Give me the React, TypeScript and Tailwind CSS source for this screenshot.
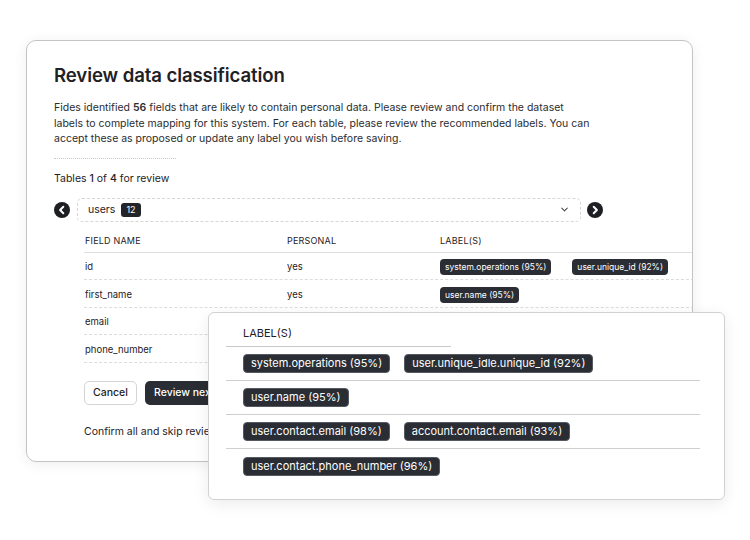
import { ChevronDown } from 'lucide-react';

const font = { fontFamily: 'Inter, "Liberation Sans", sans-serif' };

const rows = [
  { name: 'id', personal: 'yes', labels: ['system.operations (95%)', 'user.unique_id (92%)'] },
  { name: 'first_name', personal: 'yes', labels: ['user.name (95%)'] },
  { name: 'email', personal: 'yes', labels: [] as string[] },
  { name: 'phone_number', personal: 'yes', labels: [] as string[] },
];

const popRows = [
  ['system.operations (95%)', 'user.unique_idle.unique_id (92%)'],
  ['user.name (95%)'],
  ['user.contact.email (98%)', 'account.contact.email (93%)'],
  ['user.contact.phone_number (96%)'],
];

function CircleChevron({ dir }: { dir: 'left' | 'right' }) {
  return (
    <svg width="16" height="16" viewBox="0 0 16 16" className="shrink-0">
      <circle cx="8" cy="8" r="8" fill="#1d1f23" />
      <path
        d={dir === 'left' ? 'M9.3 4.8 6.1 8l3.2 3.2' : 'M6.7 4.8 9.9 8l-3.2 3.2'}
        fill="none"
        stroke="white"
        strokeWidth="2"
        strokeLinecap="round"
        strokeLinejoin="round"
      />
    </svg>
  );
}

function SmallChip({ text }: { text: string }) {
  return (
    <span className="inline-flex items-center h-[16px] px-[5px] rounded-[4px] bg-[#2a2d33] text-white text-[8.5px] leading-none whitespace-nowrap">
      {text}
    </span>
  );
}

function Chip({ text }: { text: string }) {
  return (
    <span className="inline-flex items-center h-[19px] px-[7px] rounded-[4px] bg-[#2a2d33] text-white text-[11px] leading-none whitespace-nowrap border border-[#555a62]">
      {text}
    </span>
  );
}

export default function App() {
  return (
    <div className="relative w-[750px] h-[540px] bg-white overflow-hidden text-[#1f2125]" style={font}>
      <div className="ml-[26px] mt-[40px] w-[667px] h-[422px] rounded-[10px] border border-[#c4c4c4] bg-white shadow-[0_2px_14px_rgba(0,0,0,0.07)] overflow-hidden pl-[27px] pt-[22px]">
        <h1 className="text-[18.6px] leading-[24px] font-semibold tracking-[-0.1px]">Review data classification</h1>
        <p className="mt-[13px] text-[10.5px] leading-[15.5px] text-[#2a2c30]">
          Fides identified <span className="font-semibold">56</span> fields that are likely to contain personal data. Please review and confirm the dataset
          <br />
          labels to complete mapping for this system. For each table, please review the recommended labels. You can
          <br />
          accept these as proposed or update any label you wish before saving.
        </p>
        <div className="mt-[11px] w-[122px] border-t border-dotted border-[#c8c8c8]" />
        <div className="mt-[13px] text-[10.5px] leading-[14px]">
          Tables <span className="font-medium">1</span> of <span className="font-medium">4</span> for review
        </div>

        <div className="mt-[12px] flex items-center">
          <CircleChevron dir="left" />
          <div className="ml-[7px] w-[504px] h-[24px] rounded-[5px] border border-dashed border-[#d6d6d6] flex items-center pl-[10px] pr-[10px]">
            <span className="text-[10.5px]">users</span>
            <span className="ml-[6px] inline-flex items-center h-[14px] px-[5px] rounded-[3px] bg-[#23252a] text-white text-[9px] leading-none">12</span>
            <ChevronDown className="ml-auto w-[11px] h-[11px] text-[#444]" strokeWidth={2.2} />
          </div>
          <div className="ml-[6px]">
            <CircleChevron dir="right" />
          </div>
        </div>

        <div className="ml-[30px] mt-[8px] mr-[-2px]">
          <div className="flex items-center h-[23px] text-[9px] tracking-[0.2px] border-b border-[#dedede]">
            <div className="w-[203px] pl-[1px]">FIELD NAME</div>
            <div className="w-[153px]">PERSONAL</div>
            <div>LABEL(S)</div>
          </div>
          {rows.map((r) => (
            <div key={r.name} className="flex items-center h-[27.5px] pt-[3px] text-[9.5px] border-b border-dashed border-[#dcdcdc]">
              <div className="w-[203px] pl-[1px]">{r.name}</div>
              <div className="w-[153px]">{r.personal}</div>
              <div className="flex gap-[21px]">
                {r.labels.map((l) => (
                  <SmallChip key={l} text={l} />
                ))}
              </div>
            </div>
          ))}

          <div className="mt-[18px] flex gap-[8px]">
            <button className="h-[24px] w-[53px] rounded-[5px] border border-[#d4d4d4] text-[10.5px] font-medium bg-white">Cancel</button>
            <button className="h-[24px] px-[9px] rounded-[5px] bg-[#2a2d33] text-white text-[10.5px] font-medium">Review next</button>
          </div>
          <div className="mt-[20px] text-[10.5px] leading-[14px]">Confirm all and skip review</div>
        </div>
      </div>

      <div className="absolute left-[208px] top-[312px] w-[517px] h-[188px] rounded-[6px] border border-[#d2d2d2] bg-white shadow-[0_4px_16px_rgba(0,0,0,0.08)] pt-[10px] pl-[17px] pr-[24px]">
        <div className="w-[225px] h-[24px] border-b border-[#c9c9c9] pl-[17px] text-[11px] leading-[20px]">LABEL(S)</div>
        {popRows.map((labels, i) => (
          <div
            key={i}
            className={`h-[34px] flex items-center gap-[14px] pl-[17px] ${i < popRows.length - 1 ? 'border-b border-[#cfcfcf]' : ''}`}
          >
            {labels.map((l) => (
              <Chip key={l} text={l} />
            ))}
          </div>
        ))}
      </div>
    </div>
  );
}
